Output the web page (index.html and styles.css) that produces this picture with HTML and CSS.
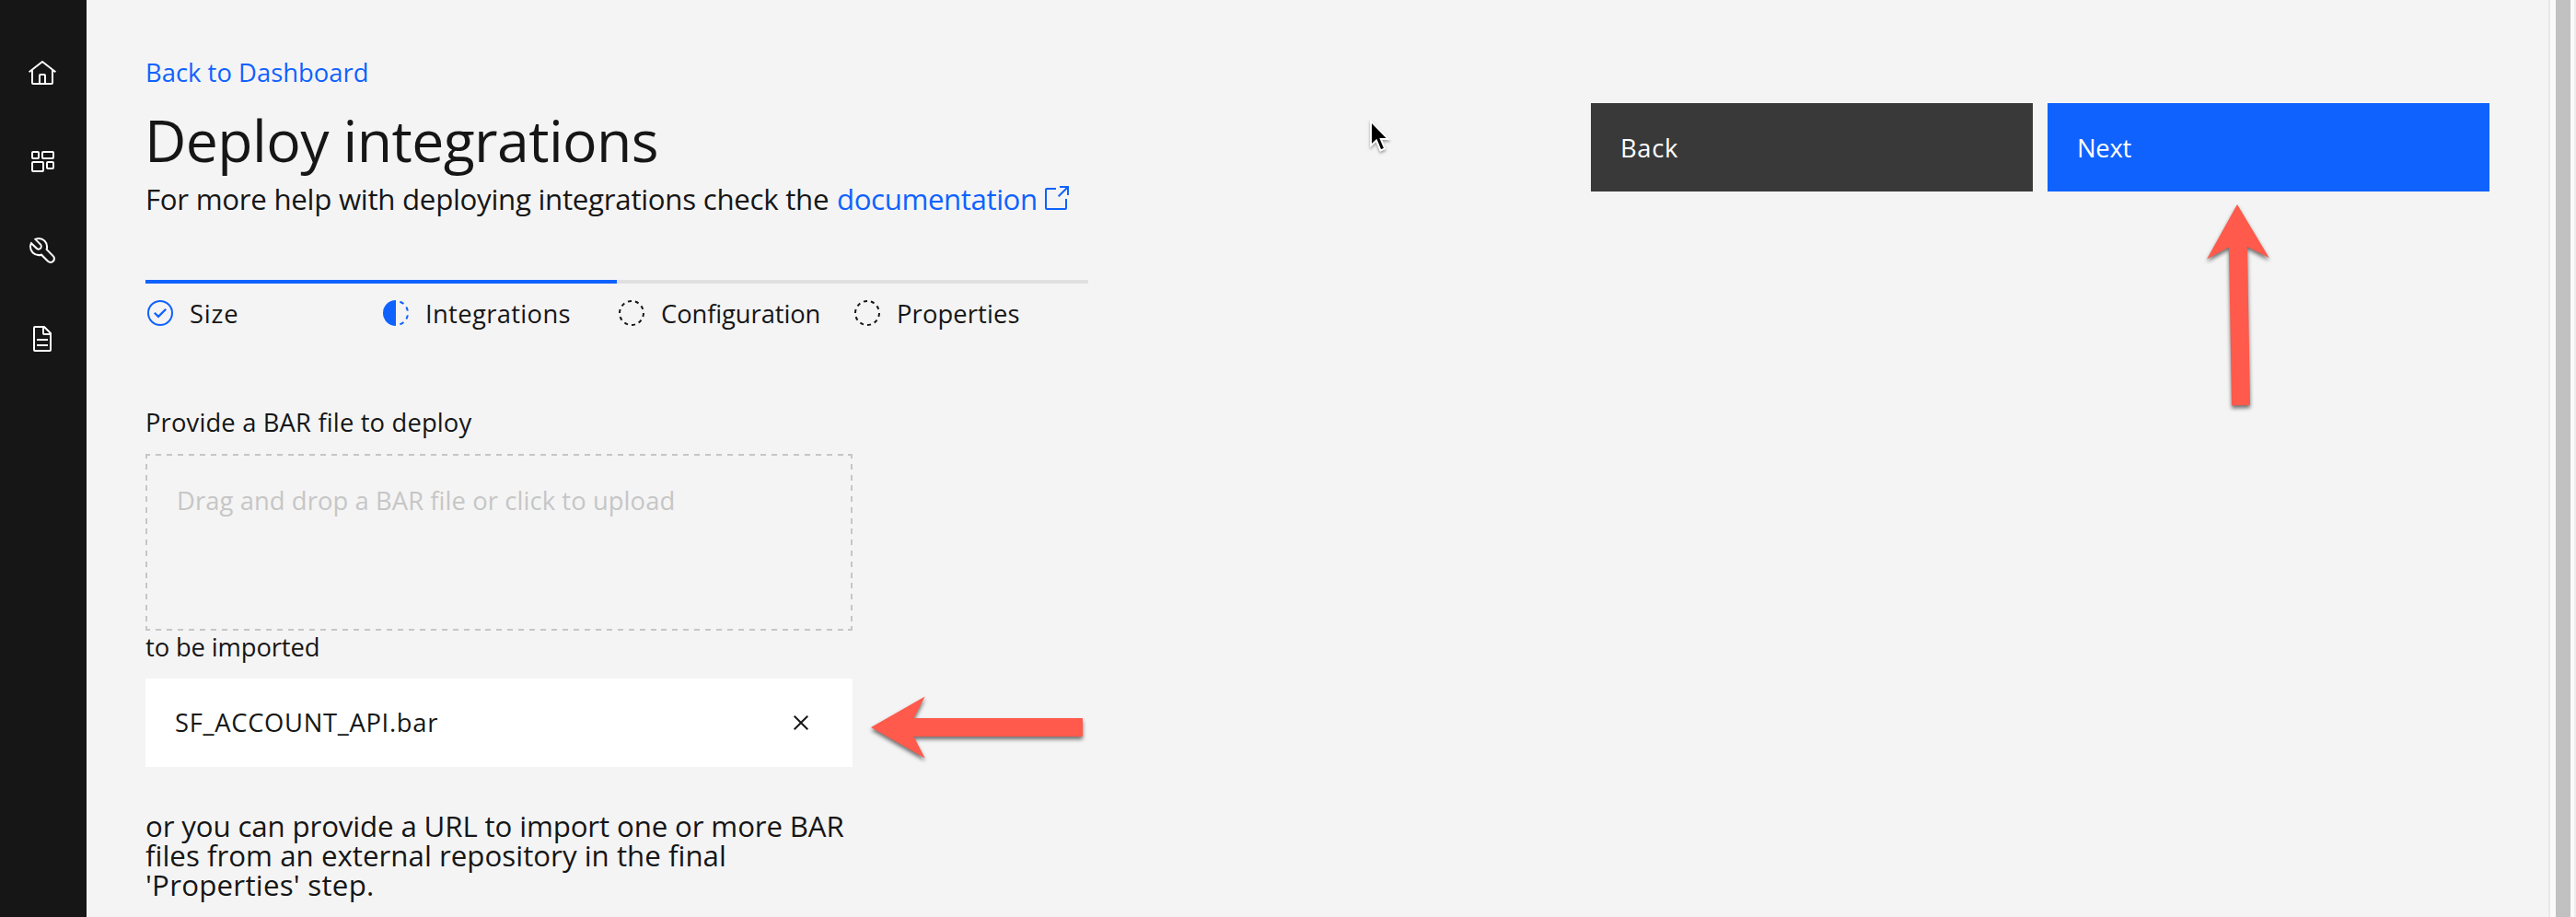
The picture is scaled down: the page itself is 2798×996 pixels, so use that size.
FILE: index.html
```html
<!DOCTYPE html>
<html lang="en">
<head>
<meta charset="utf-8">
<title>Deploy integrations</title>
<link rel="stylesheet" href="styles.css">
</head>
<body>
<div class="app">
  <nav class="sidebar">
    <a class="nav-item"><svg class="icon" viewBox="0 0 32 32"><path d="M16.612 2.214a1.01 1.01 0 0 0-1.242 0L1 13.419l1.243 1.572L4 13.621V26a2.004 2.004 0 0 0 2 2h20a2.004 2.004 0 0 0 2-2V13.63L29.757 15 31 13.428zM18 26h-4v-8h4zm2 0v-8a2.002 2.002 0 0 0-2-2h-4a2.002 2.002 0 0 0-2 2v8H6V12.062l10-7.79 10 7.8V26z"/></svg></a>
    <a class="nav-item"><svg class="icon icon-line" viewBox="0 0 32 32"><rect x="5" y="5" width="7" height="7" rx="1"/><rect x="16" y="5" width="12" height="7" rx="1"/><rect x="5" y="16" width="12" height="10" rx="1"/><rect x="21" y="16" width="7" height="7" rx="1"/></svg></a>
    <a class="nav-item"><svg class="icon" viewBox="0 0 32 32"><path d="M12.1 2a9.8 9.8 0 0 0-5.4 1.6l6.4 6.4a2.1 2.1 0 0 1 .2 3 2.1 2.1 0 0 1-3-.2L3.7 6.4A9.84 9.84 0 0 0 2 12.1a10.14 10.14 0 0 0 10.1 10.1 10.9 10.9 0 0 0 2.6-.3l6.7 6.7a5 5 0 0 0 7.1-7.1l-6.7-6.7a10.9 10.9 0 0 0 .3-2.6A10 10 0 0 0 12.1 2zm8 10.1a7.61 7.61 0 0 1-.3 2.1l-.3 1.1.8.8 6.7 6.7a2.88 2.88 0 0 1 .9 2.1A2.72 2.72 0 0 1 27 27a2.9 2.9 0 0 1-4.2 0l-6.7-6.7-.8-.8-1.1.3a7.61 7.61 0 0 1-2.1.3 8.27 8.27 0 0 1-5.7-2.3A7.63 7.63 0 0 1 4 12.1a8.33 8.33 0 0 1 .3-2.2l4.4 4.4a4.14 4.14 0 0 0 5.9.2 4.14 4.14 0 0 0-.2-5.9L10 4.2a6.45 6.45 0 0 1 2-.3 8.27 8.27 0 0 1 5.7 2.3 8.49 8.49 0 0 1 2.4 5.9z"/></svg></a>
    <a class="nav-item"><svg class="icon" viewBox="0 0 32 32"><path d="M25.7 9.3l-7-7A.908.908 0 0 0 18 2H8a2.006 2.006 0 0 0-2 2v24a2.006 2.006 0 0 0 2 2h16a2.006 2.006 0 0 0 2-2V10a.908.908 0 0 0-.3-.7zM18 4.4l5.6 5.6H18zM24 28H8V4h8v6a2.006 2.006 0 0 0 2 2h6z"/><path d="M10 22h12v2H10zM10 16h12v2H10z"/></svg></a>
  </nav>

  <main class="content">
    <div class="form">
      <a class="back-link">Back to Dashboard</a>
      <h1 class="title">Deploy integrations</h1>
      <p class="help"><span class="help-text">For more help with deploying integrations check the</span><a class="doc-link">documentation</a><svg class="icon launch" viewBox="0 0 32 32"><path d="M26 28H6a2.002 2.002 0 0 1-2-2V6a2.002 2.002 0 0 1 2-2h10v2H6v20h20V16h2v10a2.002 2.002 0 0 1-2 2z"/><path d="M20 2v2h6.586L18 12.586 19.414 14 28 5.414V12h2V2H20z"/></svg></p>

      <ol class="steps">
        <li class="step done"><svg class="icon" viewBox="0 0 32 32"><circle class="ring" cx="16" cy="16" r="13"/><path d="M14 21.5l-5-5 1.59-1.5L14 18.35 21.41 11 23 12.58z"/></svg><span class="step-size">Size</span></li>
        <li class="step done"><svg class="icon" viewBox="0 0 32 32"><path d="M16 2a14 14 0 0 0 0 28z"/><g class="dashes"><path d="M20.4 3.8a13 13 0 0 1 4 2.3"/><path d="M27.3 9.5a13 13 0 0 1 1.5 4.2"/><path d="M28.8 18.3a13 13 0 0 1-1.5 4.2"/><path d="M24.4 25.9a13 13 0 0 1-4 2.3"/></g></svg><span class="step-integrations">Integrations</span></li>
        <li class="step"><svg class="icon" viewBox="0 0 32 32"><path d="M7.7 4.7a14.7 14.7 0 0 0-3 3.1L6.3 9A13.26 13.26 0 0 1 8.9 6.3zM4.6 12.3l-1.9-.6A12.51 12.51 0 0 0 2 16H4A11.48 11.48 0 0 1 4.6 12.3zM2.7 20.4a14.4 14.4 0 0 0 2 3.9l1.6-1.2a12.89 12.89 0 0 1-1.7-3.3zM7.8 27.3a14.4 14.4 0 0 0 3.9 2l.6-1.9A12.89 12.89 0 0 1 9 25.7zM11.7 2.7l.6 1.9A11.48 11.48 0 0 1 16 4V2A12.51 12.51 0 0 0 11.7 2.7zM24.2 27.3a15.18 15.18 0 0 0 3.1-3.1L25.7 23A11.53 11.53 0 0 1 23 25.7zM27.4 19.7l1.9.6A15.47 15.47 0 0 0 30 16H28A11.48 11.48 0 0 1 27.4 19.7zM29.2 11.6a14.4 14.4 0 0 0-2-3.9L25.6 8.9a12.89 12.89 0 0 1 1.7 3.3zM24.1 4.6a14.4 14.4 0 0 0-3.9-2l-.6 1.9a12.89 12.89 0 0 1 3.3 1.7zM20.3 29.3l-.6-1.9A11.48 11.48 0 0 1 16 28v2A21.42 21.42 0 0 0 20.3 29.3z"/></svg><span class="step-configuration">Configuration</span></li>
        <li class="step"><svg class="icon" viewBox="0 0 32 32"><path d="M7.7 4.7a14.7 14.7 0 0 0-3 3.1L6.3 9A13.26 13.26 0 0 1 8.9 6.3zM4.6 12.3l-1.9-.6A12.51 12.51 0 0 0 2 16H4A11.48 11.48 0 0 1 4.6 12.3zM2.7 20.4a14.4 14.4 0 0 0 2 3.9l1.6-1.2a12.89 12.89 0 0 1-1.7-3.3zM7.8 27.3a14.4 14.4 0 0 0 3.9 2l.6-1.9A12.89 12.89 0 0 1 9 25.7zM11.7 2.7l.6 1.9A11.48 11.48 0 0 1 16 4V2A12.51 12.51 0 0 0 11.7 2.7zM24.2 27.3a15.18 15.18 0 0 0 3.1-3.1L25.7 23A11.53 11.53 0 0 1 23 25.7zM27.4 19.7l1.9.6A15.47 15.47 0 0 0 30 16H28A11.48 11.48 0 0 1 27.4 19.7zM29.2 11.6a14.4 14.4 0 0 0-2-3.9L25.6 8.9a12.89 12.89 0 0 1 1.7 3.3zM24.1 4.6a14.4 14.4 0 0 0-3.9-2l-.6 1.9a12.89 12.89 0 0 1 3.3 1.7zM20.3 29.3l-.6-1.9A11.48 11.48 0 0 1 16 28v2A21.42 21.42 0 0 0 20.3 29.3z"/></svg><span class="step-properties">Properties</span></li>
      </ol>

      <p class="label">Provide a BAR file to deploy</p>
      <div class="dropzone">Drag and drop a BAR file or click to upload</div>
      <p class="imported">to be imported</p>
      <div class="file">
        <span class="file-name">SF_ACCOUNT_API.bar</span>
        <svg class="icon" viewBox="0 0 32 32"><path d="M24 9.4L22.6 8 16 14.6 9.4 8 8 9.4l6.6 6.6L8 22.6 9.4 24l6.6-6.6 6.6 6.6 1.4-1.4-6.6-6.6z"/></svg>
      </div>
      <p class="note"><span class="note-1">or you can provide a URL to import one or more BAR</span><br><span class="note-2">files from an external repository in the final</span><br><span class="note-3">'Properties' step.</span></p>
    </div>

    <div class="actions">
      <button class="btn btn-back">Back</button>
      <button class="btn btn-next">Next</button>
    </div>
  </main>

  <div class="scrollbar"><div class="thumb"></div></div>

  <svg class="annotations" viewBox="0 0 2798 996">
    <g class="arrow">
      <path d="M2430 222L2464.7 280 2441 268 2444 440 2424 440.5 2421 268.5 2397 281.5z"/>
      <path d="M946 790L1004.7 756.5 992.5 780H1176V800H992.5L1004.7 823.5z"/>
    </g>
    <path class="cursor" d="M1489 131.500V158.200L1495 152.500 1499.500 163.500 1504.200 161.400 1499.800 151H1508z"/>
  </svg>
</div>
</body>
</html>
```
FILE: styles.css
```css
* { box-sizing: border-box; }

body {
  margin: 0;
  overflow: hidden;
  background: #f4f4f4;
  color: #161616;
  font-family: "Open Sans", sans-serif;
  font-size: 27.36px;
  line-height: 36px;
}

h1, p, ol { margin: 0; padding: 0; font-weight: 400; }

.app { position: relative; display: flex; height: 996px; }

.icon { display: block; flex: none; width: 32px; height: 32px; fill: currentColor; }
.icon-line { fill: none; stroke: currentColor; stroke-width: 2; }

.sidebar {
  flex: none;
  display: flex;
  flex-direction: column;
  width: 94px;
  padding: 32px 2px 0 0;
  background: #161616;
  color: #fff;
}
.nav-item { display: flex; align-items: center; justify-content: center; height: 96px; }

.content {
  flex: 1;
  display: flex;
  justify-content: space-between;
  align-items: flex-start;
  padding: 0 64px;
}

.form { width: 1024px; padding-top: 61px; white-space: nowrap; }

.back-link { display: block; color: #0f62fe; letter-spacing: 0.03px; }
.title {
  margin: 15px 0 8px -1px;
  font-size: 62.5px;
  line-height: 80px;
  letter-spacing: -0.578px;
}
.help { display: flex; align-items: center; font-size: 31.26px; line-height: 32px; }
.help-text { width: 751px; letter-spacing: -0.28px; }
.doc-link { width: 222px; color: #0f62fe; letter-spacing: -0.419px; }
.launch { color: #0f62fe; }

.steps {
  display: grid;
  grid-template-columns: repeat(4, 256px);
  margin-top: 72px;
  list-style: none;
}
.step {
  display: flex;
  align-items: center;
  gap: 16px;
  padding-top: 13px;
  border-top: 4px solid #e0e0e0;
}
.step.done { border-color: #0f62fe; }
.step.done .icon { color: #0f62fe; }
.step span { padding-top: 2px; }
.ring, .dashes { fill: none; stroke: currentColor; stroke-width: 2; }
.step-size { letter-spacing: 0.8px; }
.step-integrations { letter-spacing: 0.35px; }
.step-configuration { letter-spacing: -0.094px; }
.step-properties { letter-spacing: 0.12px; }

.label { margin-top: 82px; letter-spacing: 0.16px; }
.dropzone {
  width: 768px;
  height: 192px;
  margin-top: 16px;
  padding: 33px 34px 0;
  background:
    repeating-linear-gradient(90deg, #c6c6c6 0 6px, transparent 6px 11.94px) -0.7px 0 / 770px 2px no-repeat,
    repeating-linear-gradient(90deg, #c6c6c6 0 6px, transparent 6px 11.94px) -0.7px 100% / 770px 2px no-repeat,
    repeating-linear-gradient(180deg, #c6c6c6 0 6px, transparent 6px 11.78px) 0 -1px / 2px 194px no-repeat,
    repeating-linear-gradient(180deg, #c6c6c6 0 6px, transparent 6px 11.78px) 100% -1px / 2px 194px no-repeat;
  color: #c6c6c6;
  letter-spacing: 0.09px;
}
.imported { line-height: 36px; letter-spacing: -0.12px; }
.file {
  display: flex;
  align-items: center;
  justify-content: space-between;
  width: 768px;
  height: 96px;
  margin-top: 16px;
  padding: 0 40px 0 32px;
  background: #fff;
}
.file-name { letter-spacing: 0.698px; }
.note { margin-top: 48px; font-size: 31.26px; line-height: 32px; }
.note-1 { letter-spacing: -0.138px; }
.note-2 { letter-spacing: 0.02px; }
.note-3 { letter-spacing: 0.247px; }

.actions { display: flex; gap: 16px; padding-top: 112px; }
.btn {
  width: 480px;
  height: 96px;
  padding: 2px 32px 0;
  border: 0;
  color: #fff;
  font: inherit;
  text-align: left;
}
.btn-back { background: #393939; letter-spacing: 0.681px; }
.btn-next { background: #0f62fe; letter-spacing: -0.252px; }

.scrollbar {
  flex: none;
  width: 30px;
  padding-left: 6px;
  border-left: 2px solid #e8e8e8;
  border-right: 2px solid #ededed;
  background: #fafafa;
}
.thumb { width: 16px; height: 100%; background: #c1c1c1; }

.annotations { position: absolute; inset: 0; width: 2798px; height: 996px; pointer-events: none; }
.arrow { fill: #ff5a4b; filter: drop-shadow(0 3px 2px rgba(0, 0, 0, 0.55)); }
.cursor {
  fill: #000;
  stroke: #fff;
  stroke-width: 2;
  filter: drop-shadow(0 2px 1.5px rgba(0, 0, 0, 0.35));
}
```
